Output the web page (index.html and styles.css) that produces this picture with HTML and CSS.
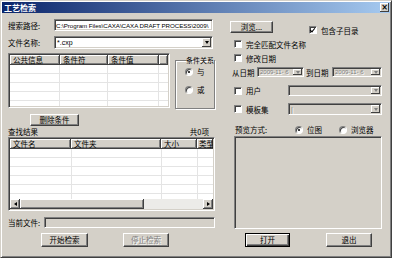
FILE: index.html
```html
<!DOCTYPE html>
<html lang="zh-CN">
<head>
    <meta charset="UTF-8">
    <title>工艺检索</title>
    <link rel="stylesheet" href="styles.css">
</head>
<body>
    <div class="window">
        <div class="titlebar">
            <span class="title">工艺检索</span>
            <span class="close-btn">×</span>
        </div>
        <div class="client">
            <div class="col-left">
                <div class="row row-path">
                    <span class="label">搜索路径:</span>
                    <div class="field path-field">C:\Program Files\CAXA\CAXA DRAFT PROCESS\2009\</div>
                </div>
                <div class="row row-name">
                    <span class="label">文件名称:</span>
                    <div class="field combo name-combo"><span class="latin">*.cxp</span><span class="drop"></span></div>
                </div>
                <div class="cond-area">
                    <div class="listview cond-list">
                        <div class="lv-head">
                            <span class="hcell" style="width:50px">公共信息</span>
                            <span class="hcell" style="width:48px">条件符</span>
                            <span class="hcell" style="width:51px">条件值</span>
                            <span class="hcell hcell-rest"></span>
                        </div>
                        <div class="lv-body cond-body"></div>
                    </div>
                    <fieldset class="group">
                        <legend>条件关系</legend>
                        <label class="radio-row"><span class="radio on"></span>与</label>
                        <label class="radio-row"><span class="radio"></span>或</label>
                    </fieldset>
                </div>
                <button class="btn btn-delete">删除条件</button>
                <div class="result-head">
                    <span>查找结果</span>
                    <span class="count">共0项</span>
                </div>
                <div class="listview result-list">
                    <div class="lv-head">
                        <span class="hcell" style="width:62px">文件名</span>
                        <span class="hcell" style="width:90px">文件夹</span>
                        <span class="hcell" style="width:36px">大小</span>
                        <span class="hcell hcell-rest">类型</span>
                    </div>
                    <div class="lv-body result-body"></div>
                    <div class="hscroll">
                        <span class="sb-btn"><span class="arr-left"></span></span>
                        <span class="sb-thumb"></span>
                        <span class="sb-track"></span>
                        <span class="sb-btn"><span class="arr-right"></span></span>
                    </div>
                </div>
                <div class="row row-current">
                    <span class="label label-short">当前文件:</span>
                    <div class="field field-disabled current-field"></div>
                </div>
                <div class="btn-row">
                    <button class="btn btn-start">开始检索</button>
                    <button class="btn btn-stop" disabled>停止检索</button>
                </div>
            </div>

            <div class="col-right">
                <div class="row-browse">
                    <button class="btn btn-browse">浏览...</button>
                    <label class="check-row check-sub"><span class="checkbox checked"></span>包含子目录</label>
                </div>
                <label class="check-row check-exact"><span class="checkbox"></span>完全匹配文件名称</label>
                <label class="check-row check-date"><span class="checkbox"></span>修改日期</label>
                <div class="date-row">
                    <span class="date-label">从日期</span>
                    <div class="field field-disabled combo date-from"><span class="latin dim">2009-11- 6</span><span class="drop drop-dim"></span></div>
                    <span class="date-label date-to-label">到日期</span>
                    <div class="field field-disabled combo date-to"><span class="latin dim">2009-11- 6</span><span class="drop drop-dim"></span></div>
                </div>
                <div class="opt-row opt-user">
                    <label class="check-row opt-check"><span class="checkbox"></span>用户</label>
                    <div class="field field-disabled combo opt-combo"><span></span><span class="drop drop-dim"></span></div>
                </div>
                <div class="opt-row opt-tpl">
                    <label class="check-row opt-check"><span class="checkbox"></span>模板集</label>
                    <div class="field field-disabled combo opt-combo"><span class="latin dim">|</span><span class="drop drop-dim"></span></div>
                </div>
                <div class="preview-row">
                    <span class="preview-label">预览方式:</span>
                    <label class="radio-row inline r-bitmap"><span class="radio on"></span>位图</label>
                    <label class="radio-row inline r-browser"><span class="radio"></span>浏览器</label>
                </div>
                <div class="preview-box"></div>
                <div class="btn-row">
                    <button class="btn btn-default btn-open">打开</button>
                    <button class="btn btn-exit">退出</button>
                </div>
            </div>
        </div>
    </div>
</body>
</html>
```

FILE: styles.css
```css
* {
    box-sizing: border-box;
}
body {
    margin: 0;
    background: #fff;
    font-family: "Noto Sans CJK SC", sans-serif;
    font-size: 7.5px;
    color: #000;
}
.window {
    width: 392px;
    height: 258px;
    background: #d4d0c8;
    border: 1px solid;
    border-color: #d4d0c8 #404040 #404040 #d4d0c8;
    box-shadow: inset 1px 1px #fff, inset -1px -1px #808080;
    padding: 1px;
    display: flex;
    flex-direction: column;
}
.titlebar {
    height: 11px;
    background: linear-gradient(to right, #0a246a, #a6caf0);
    display: flex;
    align-items: center;
    justify-content: space-between;
    padding: 0 1px 0 2px;
}
.title {
    color: #fff;
    font-weight: bold;
    font-size: 8px;
    line-height: 11px;
}
.close-btn {
    width: 9px;
    height: 9px;
    background: #d4d0c8;
    box-shadow: inset -1px -1px #404040, inset 1px 1px #fff;
    font-family: "DejaVu Sans", sans-serif;
    font-weight: bold;
    font-size: 8px;
    line-height: 9px;
    text-align: center;
}
.client {
    display: flex;
    padding: 6px 0 0 6px;
}

/* common controls */
.row {
    display: flex;
    align-items: center;
}
.label {
    width: 46px;
}
.latin {
    font-family: "Liberation Sans", sans-serif;
    font-size: 7px;
}
.dim {
    color: #808080;
    text-shadow: 1px 1px #fff;
}
.field {
    background: #fff;
    border: 1px solid;
    border-color: #808080 #fff #fff #808080;
    box-shadow: inset 1px 1px #404040, inset -1px -1px #d4d0c8;
    padding: 0 2px;
    display: flex;
    align-items: center;
    overflow: hidden;
    white-space: nowrap;
}
.field-disabled {
    background: #d4d0c8;
}
.combo {
    justify-content: space-between;
    padding-right: 1px;
}
.drop {
    width: 9px;
    height: calc(100% - 2px);
    background: #d4d0c8;
    box-shadow: inset -1px -1px #404040, inset 1px 1px #fff;
    display: flex;
    align-items: center;
    justify-content: center;
    flex-shrink: 0;
}
.drop::after {
    content: "";
    border-left: 2.5px solid transparent;
    border-right: 2.5px solid transparent;
    border-top: 3px solid #000;
}
.drop-dim::after {
    border-top-color: #808080;
}
.btn {
    font-family: inherit;
    font-size: 7.5px;
    color: #000;
    background: #d4d0c8;
    border: 1px solid;
    border-color: #fff #404040 #404040 #fff;
    box-shadow: inset -1px -1px #808080;
    padding: 0;
    line-height: 1;
}
.btn:disabled {
    color: #808080;
    text-shadow: 1px 1px #fff;
}
.btn-default {
    border: 1px solid #000;
    box-shadow: inset 1px 1px #fff, inset -1px -1px #404040, inset -2px -2px #808080;
}
.checkbox {
    width: 8px;
    height: 8px;
    background: #fff;
    border: 1px solid;
    border-color: #808080 #fff #fff #808080;
    box-shadow: inset 1px 1px #404040;
    margin-right: 4px;
    flex-shrink: 0;
    position: relative;
}
.checkbox.checked::after {
    content: "";
    position: absolute;
    left: 1px;
    top: 0;
    width: 2px;
    height: 4px;
    border: solid #000;
    border-width: 0 1.5px 1.5px 0;
    transform: rotate(40deg);
}
.check-row {
    display: flex;
    align-items: center;
    height: 8px;
}
.radio {
    width: 8px;
    height: 8px;
    border-radius: 50%;
    background: #fff;
    border: 1px solid;
    border-color: #808080 #fff #fff #808080;
    box-shadow: inset 1px 1px #404040;
    margin-right: 4px;
    display: flex;
    align-items: center;
    justify-content: center;
    flex-shrink: 0;
}
.radio.on::after {
    content: "";
    width: 2px;
    height: 2px;
    border-radius: 50%;
    background: #000;
}
.radio-row {
    display: flex;
    align-items: center;
}

/* left column */
.col-left {
    width: 207px;
    display: flex;
    flex-direction: column;
}
.row-path {
    height: 12px;
}
.path-field {
    width: 159px;
    height: 12px;
    font-family: "Liberation Sans", sans-serif;
    font-size: 6.2px;
    letter-spacing: -0.05px;
    padding-left: 1px;
}
.row-name {
    height: 13px;
    margin-top: 5px;
}
.name-combo {
    width: 159px;
    height: 13px;
}
.cond-area {
    display: flex;
    margin-top: 4px;
    height: 56px;
}
.listview {
    background: #fff;
    border: 1px solid;
    border-color: #808080 #fff #fff #808080;
    box-shadow: inset 1px 1px #404040, inset -1px -1px #d4d0c8;
    padding: 1px;
    display: flex;
    flex-direction: column;
    overflow: hidden;
}
.cond-list {
    width: 162px;
    height: 55px;
}
.lv-head {
    display: flex;
    height: 10px;
    flex-shrink: 0;
}
.hcell {
    background: #d4d0c8;
    box-shadow: inset -1px -1px #404040, inset 1px 1px #fff, inset -2px -2px #808080;
    padding-left: 3px;
    line-height: 10px;
    white-space: nowrap;
    overflow: hidden;
    flex-shrink: 0;
}
.hcell-rest {
    flex: 1;
    flex-shrink: 1;
    min-width: 0;
    padding-left: 2px;
}
.lv-body {
    flex: 1;
    background-color: #fff;
    background-image:
        repeating-linear-gradient(to bottom, transparent 0, transparent 8px, #e4e4e4 8px, #e4e4e4 9px);
}
.cond-body {
    background-image:
        linear-gradient(to right, transparent 49px, #e4e4e4 49px, #e4e4e4 50px, transparent 50px, transparent 97px, #e4e4e4 97px, #e4e4e4 98px, transparent 98px, transparent 148px, #e4e4e4 148px, #e4e4e4 149px, transparent 149px),
        repeating-linear-gradient(to bottom, transparent 0, transparent 8px, #e4e4e4 8px, #e4e4e4 9px);
}
.result-body {
    background-image:
        linear-gradient(to right, transparent 61px, #e4e4e4 61px, #e4e4e4 62px, transparent 62px, transparent 151px, #e4e4e4 151px, #e4e4e4 152px, transparent 152px, transparent 187px, #e4e4e4 187px, #e4e4e4 188px, transparent 188px),
        repeating-linear-gradient(to bottom, transparent 0, transparent 8px, #e4e4e4 8px, #e4e4e4 9px);
}
.group {
    width: 40px;
    height: 53px;
    margin: 3px 0 0 5px;
    padding: 3px 0 0 9px;
    border: 1px solid #808080;
    box-shadow: 1px 1px #fff, inset 1px 1px #fff;
    min-width: 0;
}
.group legend {
    padding: 0;
    margin-left: 1px;
    line-height: 8px;
    white-space: nowrap;
    font-size: 7px;
}
.group .radio-row {
    height: 9px;
    margin-bottom: 9px;
}
.btn-delete {
    width: 49px;
    height: 12px;
    margin: 5px 0 0 22px;
}
.result-head {
    height: 11px;
    display: flex;
    justify-content: space-between;
    align-items: center;
    padding-right: 6px;
}
.result-list {
    width: 207px;
    height: 74px;
}
.result-list .lv-head .hcell:first-child {
    width: 61px !important;
}
.hscroll {
    height: 10px;
    display: flex;
    flex-shrink: 0;
}
.sb-btn {
    width: 10px;
    background: #d4d0c8;
    box-shadow: inset -1px -1px #404040, inset 1px 1px #fff, inset -2px -2px #808080;
    display: flex;
    align-items: center;
    justify-content: center;
    flex-shrink: 0;
}
.arr-left {
    border-top: 2.5px solid transparent;
    border-bottom: 2.5px solid transparent;
    border-right: 3px solid #000;
}
.arr-right {
    border-top: 2.5px solid transparent;
    border-bottom: 2.5px solid transparent;
    border-left: 3px solid #000;
}
.sb-thumb {
    width: 124px;
    background: #d4d0c8;
    box-shadow: inset -1px -1px #404040, inset 1px 1px #fff, inset -2px -2px #808080;
}
.sb-track {
    flex: 1;
    background: #ecebe8;
}
.row-current {
    height: 11px;
    margin-top: 6px;
}
.label-short {
    width: 36px;
}
.current-field {
    width: 171px;
    height: 11px;
}
.btn-row {
    display: flex;
    margin-top: 5px;
    height: 14px;
}
.btn-start {
    width: 47px;
    margin-left: 33px;
}
.btn-stop {
    width: 46px;
    margin-left: 35px;
}

/* right column */
.col-right {
    width: 152px;
    margin-left: 15px;
    display: flex;
    flex-direction: column;
}
.row-browse {
    display: flex;
    align-items: flex-start;
    height: 16px;
}
.btn-browse {
    width: 43px;
    height: 12px;
    margin-top: 2px;
}
.check-sub {
    margin: 7px 0 0 36px;
}
.check-exact {
    margin: 5px 0 0 4px;
}
.check-date {
    margin: 6px 0 0 4px;
}
.date-row {
    display: flex;
    align-items: center;
    height: 10px;
    margin-top: 5px;
    padding-left: 2px;
}
.date-label {
    width: 25px;
    flex-shrink: 0;
}
.date-to-label {
    width: 26px;
    margin-left: 2px;
}
.date-from {
    width: 47px;
    height: 10px;
}
.date-to {
    width: 50px;
    height: 10px;
}
.date-row .latin {
    font-size: 6px;
}
.opt-row {
    display: flex;
    align-items: center;
    padding-left: 4px;
}
.opt-user {
    height: 11px;
    margin-top: 8px;
}
.opt-tpl {
    height: 12px;
    margin-top: 7px;
}
.opt-check {
    width: 54px;
}
.opt-combo {
    width: 94px;
    height: 100%;
}
.preview-row {
    display: flex;
    align-items: center;
    height: 9px;
    margin-top: 10px;
    padding-left: 5px;
}
.preview-label {
    width: 60px;
}
.r-browser {
    margin-left: 17px;
}
.preview-box {
    width: 148px;
    height: 93px;
    margin: 2px 0 0 4px;
    border: 1px solid;
    border-color: #808080 #fff #fff #808080;
    box-shadow: inset 1px 1px #404040;
}
.col-right .btn-row {
    margin-top: 4px;
}
.btn-open {
    width: 45px;
    margin-left: 15px;
}
.btn-exit {
    width: 46px;
    margin-left: 36px;
}
```
